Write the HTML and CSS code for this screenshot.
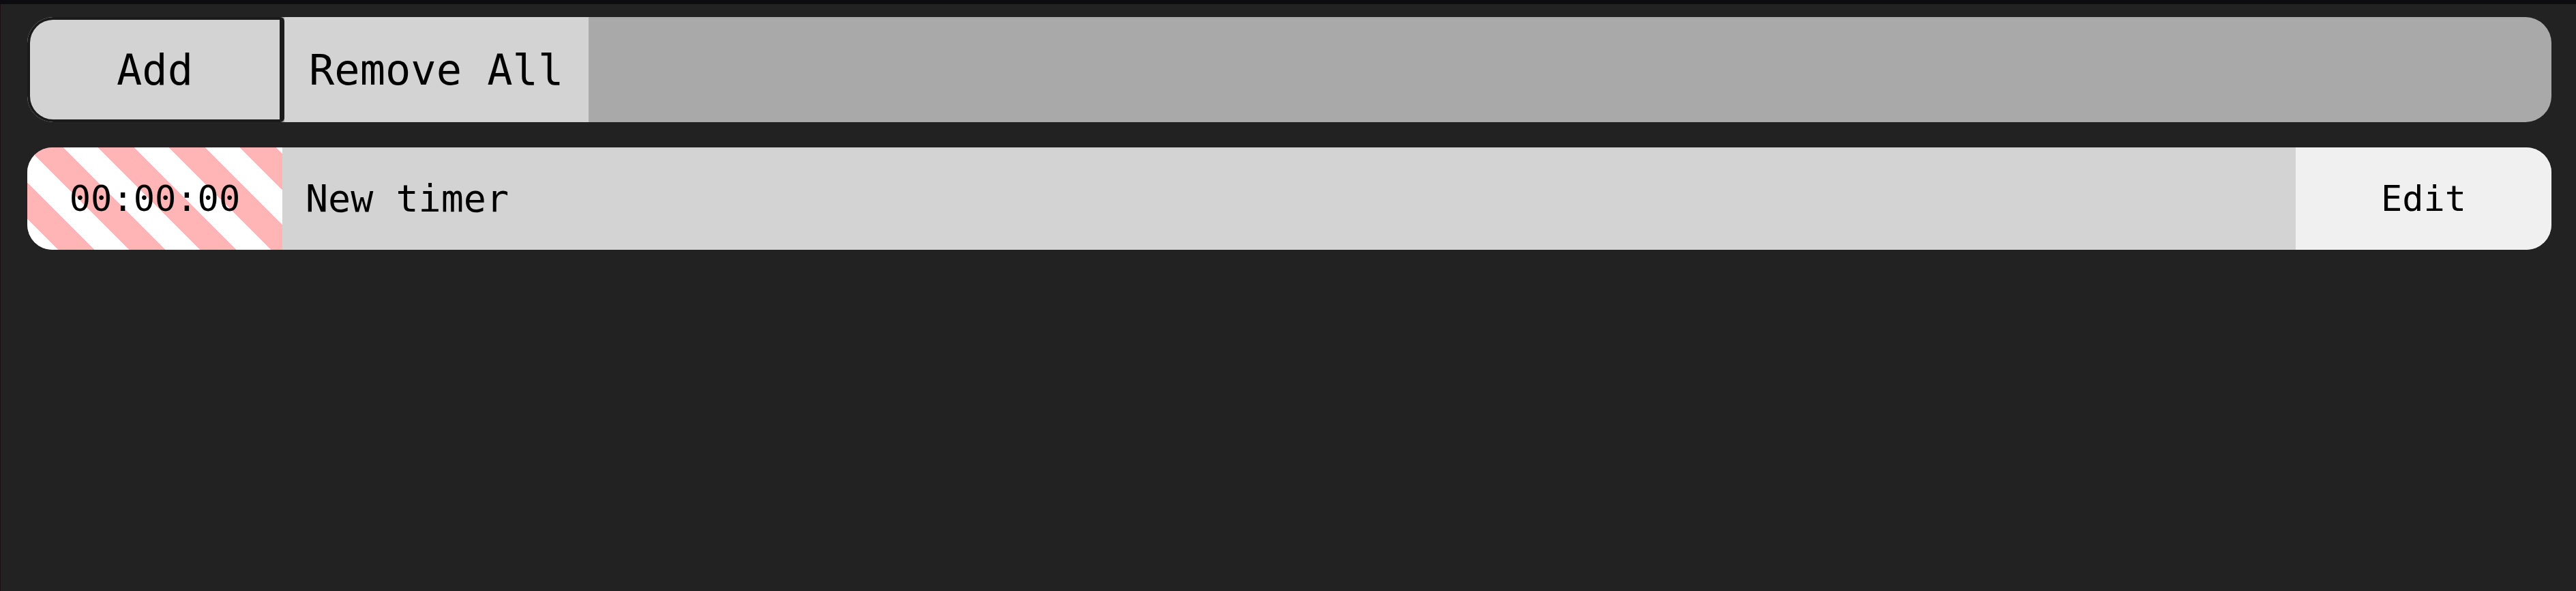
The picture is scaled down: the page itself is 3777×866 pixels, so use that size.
FILE: index.html
```html
<!DOCTYPE html>
<html>
<head>
<meta charset="utf-8">
<link rel="stylesheet" href="styles.css">
</head>
<body>
<div class="strip"></div>
<div class="app">
  <div class="content">
    <div class="toolbar">
      <button class="btn add">Add</button>
      <button class="btn remove">Remove All</button>
    </div>
    <div class="timer-row">
      <div class="time">00:00:00</div>
      <div class="name">New timer</div>
      <div class="edit">Edit</div>
    </div>
  </div>
</div>
</body>
</html>
```
FILE: styles.css
```css
html, body {
  margin: 0;
  padding: 0;
  background: #222222;
}
body {
  font-family: "DejaVu Sans Mono", monospace;
  color: #000;
}
.strip {
  height: 6px;
  background: #0b0b10;
}
.app {
  min-height: 860px;
  border-left: 1px solid #1d0e16;
  box-sizing: border-box;
}
.content {
  padding: 19px 36px 0 39px;
  display: flex;
  flex-direction: column;
  gap: 37px;
}
.toolbar {
  display: flex;
  height: 154px;
  background: #a9a9a9;
  border-radius: 38px;
  overflow: hidden;
}
.btn {
  font-family: "DejaVu Sans Mono", monospace;
  font-size: 62px;
  color: #000;
  background: #d3d3d3;
  margin: 0;
  padding: 0;
  cursor: pointer;
}
.add {
  width: 377px;
  box-sizing: border-box;
  border: 4px solid #1b1b1b;
  border-right-width: 7px;
  border-radius: 38px 6px 6px 38px;
}
.remove {
  border: none;
  padding: 0 37px 0 36px;
}
.timer-row {
  display: flex;
  height: 150px;
  background: #d3d3d3;
  border-radius: 37px;
  overflow: hidden;
  font-size: 52px;
}
.time {
  width: 374px;
  flex: none;
  display: flex;
  align-items: center;
  justify-content: center;
  background: repeating-linear-gradient(45deg, #ffffff 0 32.5px, #ffb5b5 32.5px 69.3px, #ffffff 69.3px 73.54px);
}
.name {
  flex: 1;
  display: flex;
  align-items: center;
  padding-left: 34px;
  font-size: 55px;
}
.edit {
  width: 375px;
  flex: none;
  display: flex;
  align-items: center;
  justify-content: center;
  background: #f0f0f0;
}
```
